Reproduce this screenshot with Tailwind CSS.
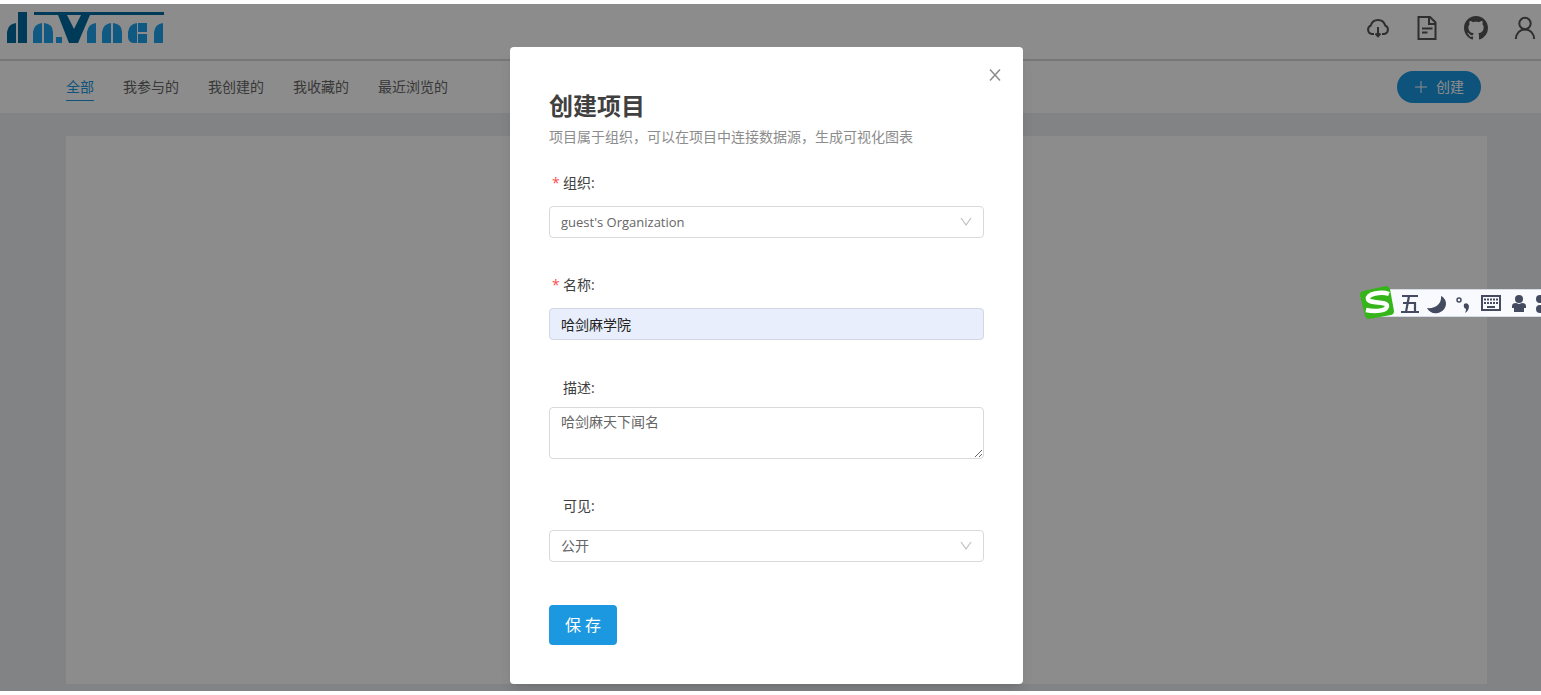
<!DOCTYPE html>
<html lang="zh-CN">
<head>
<meta charset="utf-8">
<meta name="viewport" content="width=device-width, initial-scale=1">
<title>Davinci</title>
<script src="https://cdn.jsdelivr.net/npm/@tailwindcss/browser@4"></script>
</head>
<body class="bg-white py-1 font-['Open_Sans','Noto_Sans_CJK_SC',sans-serif] text-sm text-[#666]">
<div class="relative flex min-h-[calc(100vh-8px)] flex-col overflow-hidden bg-[#edeff2]">
  <header class="flex h-[57px] items-center justify-between border-b-2 border-[#d9d9d9] bg-white pr-1 pb-2 pl-1.5">
    <a href="#" aria-label="Davinci">
      <svg class="h-9 w-40" viewBox="6 10 160 36" aria-hidden="true">
        <g fill="#006ba3">
          <path d="M16 23v20H7V32q1-8 9-9z"/>
          <path d="M18 12h9v31h-9z"/>
          <path d="M34 12h130v3H90L78 43h-9L58 15H34z"/>
          <path d="M67 15h14l-7 14z" fill="#fff"/>
        </g>
        <g fill="#1ca3ef">
          <path d="M42 23v20h-9V32q1-8 9-9z"/>
          <path d="M44 23q9 1 9 9v11h-9z"/>
          <path d="M56 37h6v6h-6z"/>
          <path d="M96 23v20h-9V32q1-8 9-9z"/>
          <path d="M111 23v20h-9V32q1-8 9-9z"/>
          <path d="M113 23q9 1 9 9v11h-9z"/>
          <path d="M137 23v20h-4q-5-1-5-6v-5q1-8 9-9z"/>
          <path d="M138 23h9v9h-9zM138 34h9v9h-9z"/>
          <path d="M163 23v20h-9V32q1-8 9-9z"/>
        </g>
      </svg>
    </a>
    <nav class="flex items-center gap-[25px] text-[#555]" aria-label="工具">
      <a href="#" aria-label="下载"><svg class="size-6" viewBox="0 0 24 24" fill="none" stroke="currentColor" stroke-width="2"><path d="M8 18H5.500A4.500 4.500 0 0 1 4.800 9.500C5.700 6.200 8.500 4 12 4s6.300 2.200 7.200 5.500A4.500 4.500 0 0 1 18.500 18H16M12 11v9M9.500 17.500 12 20.200l2.500-2.700"/></svg></a>
      <a href="#" aria-label="文档"><svg class="size-6" viewBox="0 0 24 24" fill="none" stroke="currentColor" stroke-width="2"><path d="M3.500 1H15l5.500 5.500V23h-17zM14 1v7h6.500M7 12.500h10.500M7 16.500h5.500"/></svg></a>
      <a href="#" aria-label="GitHub"><svg class="size-6" viewBox="0 0 16 16" fill="currentColor"><path d="M8 0C3.580 0 0 3.580 0 8c0 3.540 2.290 6.530 5.470 7.590.4.070.55-.17.55-.38 0-.19-.01-.82-.01-1.490-2.010.37-2.530-.49-2.690-.94-.09-.23-.48-.94-.82-1.130-.28-.15-.68-.52-.01-.53.63-.01 1.080.58 1.230.82.72 1.210 1.870.87 2.330.66.07-.52.28-.87.51-1.070-1.780-.2-3.640-.89-3.640-3.950 0-.87.31-1.590.82-2.150-.08-.2-.36-1.020.08-2.120 0 0 .67-.21 2.200.82.64-.18 1.320-.27 2-.27s1.360.09 2 .27c1.530-1.040 2.200-.82 2.200-.82.44 1.100.16 1.920.08 2.120.51.56.82 1.270.82 2.150 0 3.070-1.870 3.750-3.650 3.950.29.25.54.73.54 1.480 0 1.070-.01 1.930-.01 2.200 0 .21.15.46.55.38A8 8 0 0 0 16 8c0-4.420-3.580-8-8-8z"/></svg></a>
      <a href="#" aria-label="用户"><svg class="size-6" viewBox="0 0 24 24" fill="none" stroke="currentColor" stroke-width="2"><circle cx="12" cy="7.500" r="5.700"/><path d="M2.800 23c.3-5.500 4-9.600 9.200-9.600s8.900 4.100 9.200 9.600"/></svg></a>
    </nav>
  </header>

  <div class="flex h-[52px] items-center justify-between bg-white pr-[60px] pl-[66px]">
    <nav class="flex gap-[29px] pt-0.5 leading-[22px]" aria-label="项目分类">
      <a href="#" class="border-b border-[#1b98e0] pb-0.5 text-[#1b98e0]">全部</a>
      <a href="#">我参与的</a>
      <a href="#">我创建的</a>
      <a href="#">我收藏的</a>
      <a href="#">最近浏览的</a>
    </nav>
    <button type="button" class="flex h-8 items-center gap-2 rounded-full bg-[#1b98e0] px-[17px] text-white">
      <svg class="size-3.5" viewBox="0 0 14 14" stroke="currentColor" aria-hidden="true"><path d="M7 1v12M1 7h12"/></svg>创建
    </button>
  </div>

  <main class="mt-[23px] mr-[54px] mb-[7px] ml-[66px] flex-1 bg-white"></main>

  <div class="absolute inset-0 bg-black/45 pt-[43px] pr-2">
    <section role="dialog" aria-modal="true" aria-labelledby="dlg-title" class="relative mx-auto w-full max-w-[513px] rounded bg-white px-[39px] pt-[43px] pb-[39px] shadow-lg">
      <button type="button" aria-label="关闭" class="absolute top-5 right-5 text-[#8c8c8c]">
        <svg class="size-4" viewBox="0 0 16 16" fill="none" stroke="currentColor" stroke-width="1.500"><path d="m3 2.500 10 11M13 2.500 3 13.500"/></svg>
      </button>
      <h1 id="dlg-title" class="text-2xl font-bold text-[#404040]">创建项目</h1>
      <p class="mt-[3px] leading-6 text-[#8c8c8c]">项目属于组织，可以在项目中连接数据源，生成可视化图表</p>
      <form class="mt-[18px]">
        <label for="org" class="flex h-8 items-center gap-1 pl-[3px] text-[#404040]"><span class="w-[7px] text-[#ff4d4f]">*</span><span>组织:</span></label>
        <div class="relative mt-[7px]">
          <select id="org" class="h-8 w-full appearance-none rounded border border-[#d9d9d9] bg-white px-[11px] text-[13px]"><option>guest's Organization</option></select>
          <svg class="pointer-events-none absolute top-2.5 right-3 size-3 text-[#bfbfbf]" viewBox="0 0 12 12" fill="none" stroke="currentColor" stroke-width="1.200"><path d="m1 2 5 7 5-7"/></svg>
        </div>
        <label for="name" class="mt-[31px] flex h-8 items-center gap-1 pl-[3px] text-[#404040]"><span class="w-[7px] text-[#ff4d4f]">*</span><span>名称:</span></label>
        <input id="name" type="text" value="哈剑麻学院" class="mt-[7px] block h-8 w-full rounded border border-[#d0d7e5] bg-[#e8eefc] px-[11px] text-[#222]">
        <label for="desc" class="mt-8 flex h-8 items-center pl-3.5 text-[#404040]">描述:</label>
        <textarea id="desc" class="mt-[3px] block h-[52px] w-full rounded border border-[#d9d9d9] bg-white px-[11px] py-1">哈剑麻天下闻名</textarea>
        <label for="vis" class="mt-[31px] flex h-8 items-center pl-3.5 text-[#404040]">可见:</label>
        <div class="relative mt-2">
          <select id="vis" class="h-8 w-full appearance-none rounded border border-[#d9d9d9] bg-white px-[11px]"><option>公开</option></select>
          <svg class="pointer-events-none absolute top-2.5 right-3 size-3 text-[#bfbfbf]" viewBox="0 0 12 12" fill="none" stroke="currentColor" stroke-width="1.200"><path d="m1 2 5 7 5-7"/></svg>
        </div>
        <button type="submit" class="mt-[43px] block h-10 w-[68px] rounded bg-[#1b98e0] text-base text-white">保 存</button>
      </form>
    </section>
  </div>

  <!-- input-method toolbar floating at the window edge -->
  <aside class="absolute top-[281px] right-0 flex h-9 w-[182px] items-center" aria-label="输入法">
    <div class="absolute inset-y-1 right-0 left-4 border-y border-[#d5dce6] bg-[#f8fafd]"></div>
    <svg class="relative h-9 w-full text-[#444b60]" viewBox="0 0 182 36" aria-hidden="true">
      <path d="M4 6 27 1q3 0 4 3l4 22q0 3-3 4L10 34q-3 0-4-3L1 10q0-3 3-4z" fill="#36b51b"/>
      <path d="M30 9C22 6 8 9 9 14c1 5 19 2 19 7 0 5-12 6-21 4" fill="none" stroke="#fff" stroke-width="4.500"/>
      <path d="M43 11h16M42 27h18M50 11l-3 16M44 18h12v9" fill="none" stroke="currentColor" stroke-width="2.200"/>
      <path d="M82 11c8 4 6 15-3 17-5 1-9-1-11-5 8 1 15-4 14-12z" fill="currentColor"/>
      <circle cx="100" cy="15" r="2" fill="none" stroke="currentColor" stroke-width="1.500"/>
      <path d="M105 19q4-2 5 2 0 5-4 7 1-2 1-4-3-1-2-5z" fill="currentColor"/>
      <path d="M123 11h18v14h-18z" fill="none" stroke="currentColor" stroke-width="2"/>
      <path d="M125 14.500h14M125 18h14" stroke="currentColor" stroke-width="2" stroke-dasharray="2 1"/>
      <path d="M128 22h8" stroke="currentColor" stroke-width="2"/>
      <circle cx="160" cy="14" r="4" fill="currentColor"/>
      <path d="M153 21q0-3 4-3l3 1 3-1q4 0 4 3v2h-2v4h-10v-4h-2z" fill="currentColor"/>
      <circle cx="181" cy="14" r="4" fill="currentColor"/><circle cx="181" cy="24" r="4" fill="currentColor"/>
    </svg>
  </aside>
</div>
</body>
</html>
